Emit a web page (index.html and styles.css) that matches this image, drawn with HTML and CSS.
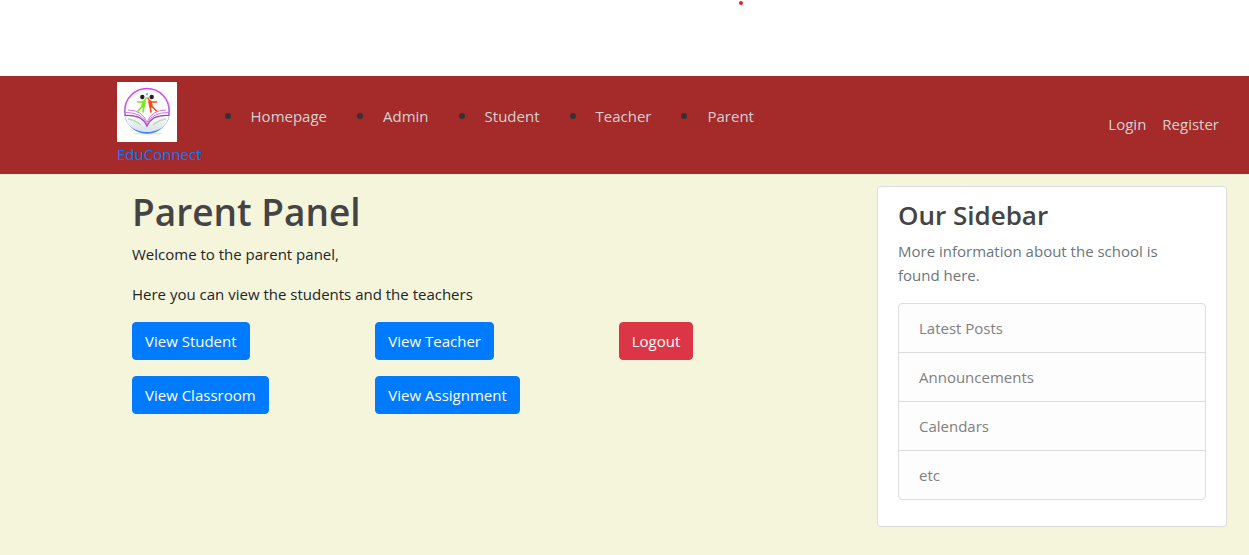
FILE: index.html
```html
<!DOCTYPE html>
<html lang="en">
<head>
<meta charset="utf-8">
<meta name="viewport" content="width=device-width, initial-scale=1">
<title>EduConnect</title>
<link rel="stylesheet" href="styles.css">
</head>
<body>
<div class="top-strip"><span class="dot"></span></div>
<header class="navbar">
  <a class="brand" href="#">
    <svg class="logo" viewBox="0 0 60 60" aria-hidden="true">
      <defs>
        <linearGradient id="ring" x1="0" y1="0" x2="0" y2="1">
          <stop offset="0" stop-color="#d944ee"/>
          <stop offset=".5" stop-color="#c264ea"/>
          <stop offset=".75" stop-color="#4a90ee"/>
          <stop offset="1" stop-color="#2f86f2"/>
        </linearGradient>
        <linearGradient id="page" x1="0" y1="0" x2="0" y2="1">
          <stop offset="0" stop-color="#ffffff"/>
          <stop offset="1" stop-color="#d6dee8"/>
        </linearGradient>
      </defs>
      <rect width="60" height="60" fill="#fff"/>
      <ellipse cx="31" cy="51.500" rx="15" ry="1" fill="#e4e4e4"/>
      <circle cx="30" cy="28.700" r="22.200" fill="none" stroke="url(#ring)" stroke-width="1.700"/>
      <path d="M8 33.500Q24 33 30 44Q36 33 52 33.500Q50 49 30 50Q10 49 8 33.500Z" fill="url(#page)"/>
      <path d="M7.500 33.500Q25 32 30 44Q35 32 52.500 33.500" fill="none" stroke="#a344c0" stroke-width="1.200"/>
      <path d="M8 30.500Q25 30 30 42Q35 30 52 30.500M11 28Q25 28 30 40Q35 28 49 28" fill="none" stroke="#cb78dc" stroke-width="1"/>
      <path d="M11 37Q18 38 24 43M49 37Q42 38 36 43" fill="none" stroke="#b5dfb5" stroke-width="1.400"/>
      <circle cx="25.300" cy="15" r="2.200" fill="#222"/>
      <circle cx="34.700" cy="15" r="2.200" fill="#222"/>
      <circle cx="30" cy="12.200" r="1.100" fill="#42bde8"/>
      <g fill="none" stroke-linecap="round" stroke-linejoin="round">
        <path d="M29 16L27 20L20.500 20M25.500 24L21 29M27 24L26 30" stroke="#7bea19" stroke-width="1.600"/>
        <path d="M27 20L26 24" stroke="#7bea19" stroke-width="3.600"/>
        <path d="M31 16L33 20L39.500 20M34.500 24L39.500 29M33 24L34 30" stroke="#fa4b18" stroke-width="1.600"/>
        <path d="M33 20L34 24" stroke="#fa4b18" stroke-width="3.600"/>
      </g>
    </svg>
    <span>EduConnect</span>
  </a>
  <nav class="menu-wrap" aria-label="Main">
    <ul class="menu">
      <li><a href="#">Homepage</a></li>
      <li><a href="#">Admin</a></li>
      <li><a href="#">Student</a></li>
      <li><a href="#">Teacher</a></li>
      <li><a href="#">Parent</a></li>
    </ul>
  </nav>
  <div class="account">
    <a href="#">Login</a>
    <a href="#">Register</a>
  </div>
</header>
<div class="layout">
  <main class="panel">
    <h1>Parent Panel</h1>
    <p>Welcome to the parent panel,</p>
    <p>Here you can view the students and the teachers</p>
    <div class="actions">
      <div><button type="button" class="btn">View Student</button></div>
      <div><button type="button" class="btn">View Teacher</button></div>
      <div><button type="button" class="btn btn-danger">Logout</button></div>
      <div><button type="button" class="btn">View Classroom</button></div>
      <div><button type="button" class="btn">View Assignment</button></div>
    </div>
  </main>
  <div class="side-column">
    <aside class="sidebar">
      <h2>Our Sidebar</h2>
      <p>More information about the school is found here.</p>
      <ul class="list-group">
        <li>Latest Posts</li>
        <li>Announcements</li>
        <li>Calendars</li>
        <li>etc</li>
      </ul>
    </aside>
  </div>
</div>
</body>
</html>
```

FILE: styles.css
```css
* {
  box-sizing: border-box;
}

body {
  margin: 0;
  min-height: 100vh;
  display: flex;
  flex-direction: column;
  background: #f5f5dc;
  color: #212529;
  font-family: "Segoe UI", "Open Sans", sans-serif;
  font-size: 15px;
  line-height: 24px;
}

h1,
h2,
p,
ul {
  margin: 0;
  padding: 0;
}

h1,
h2 {
  color: #444;
  font-weight: 600;
}

.top-strip {
  display: flex;
  height: 76px;
  padding: 1px 0 0 59%;
  background: #fff;
}

.dot {
  width: 4px;
  height: 4px;
  margin-left: 2px;
  border-radius: 50%;
  background: #ed1c24;
}

.navbar {
  display: flex;
  align-items: center;
  padding: 6px 30px 8px 117px;
  background: #a52a2a;
}

.navbar a {
  text-decoration: none;
}

.brand {
  display: flex;
  flex-direction: column;
  color: #007bff;
}

.logo {
  display: block;
  width: 60px;
  height: 60px;
}

.menu-wrap {
  align-self: flex-start;
  padding: 22px 0 0 23px;
}

.menu {
  display: flex;
  gap: 30px;
  list-style: none;
}

.menu li {
  display: flex;
  align-items: center;
  gap: 20px;
}

.menu li::before {
  content: "";
  width: 6px;
  height: 6px;
  border-radius: 50%;
  background: #333;
}

.menu a,
.account a {
  color: #d3d3d3;
}

.account {
  display: flex;
  gap: 16px;
  margin-left: auto;
}

.layout {
  display: grid;
  grid-template-columns: 2fr 1fr;
  padding: 12px 7px 28px 102px;
}

.panel {
  padding-left: 30px;
}

.panel h1 {
  margin-bottom: 4px;
  font-size: 37px;
  line-height: 52px;
}

.panel p {
  margin-bottom: 16px;
}

.actions {
  display: grid;
  grid-template-columns: repeat(3, 1fr);
  row-gap: 16px;
}

.btn {
  display: block;
  padding: 6px 12px;
  border: 1px solid #007bff;
  border-radius: 4px;
  background: #007bff;
  color: #fff;
  font: inherit;
  cursor: pointer;
}

.btn-danger {
  border-color: #dc3545;
  background: #dc3545;
}

.side-column {
  padding: 0 15px;
}

.sidebar {
  padding: 12px 20px 26px;
  border: 1px solid #dcdddf;
  border-radius: 4px;
  background: #fff;
}

.sidebar h2 {
  margin-bottom: 8px;
  font-size: 26px;
  line-height: 32px;
}

.sidebar p {
  margin-bottom: 16px;
  padding-right: 20px;
  color: #6c757d;
}

.list-group {
  border: 1px solid #dcdddf;
  border-radius: 4px;
  background: #fdfdfd;
  color: #808080;
  list-style: none;
}

.list-group li {
  padding: 12px 20px;
}

.list-group li + li {
  border-top: 1px solid #dcdddf;
}
```
